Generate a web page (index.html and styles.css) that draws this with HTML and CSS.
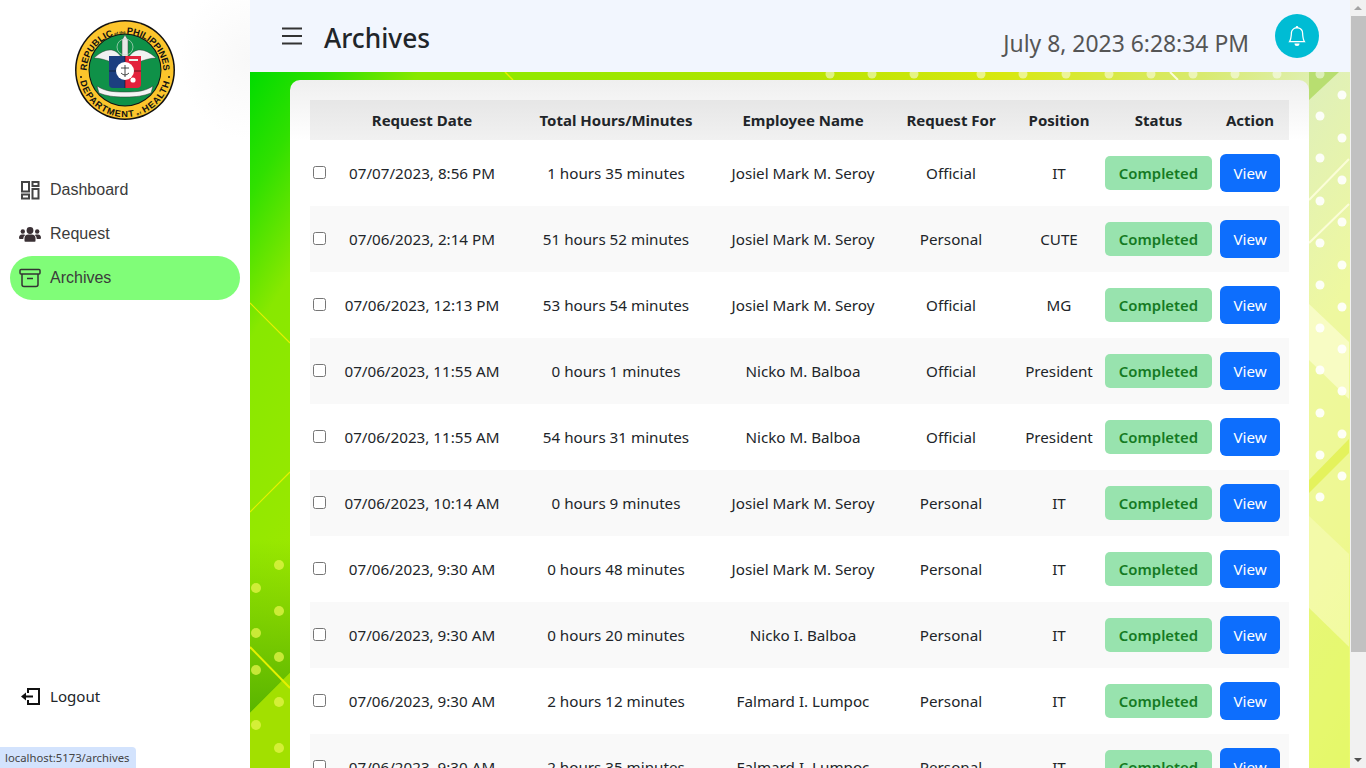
FILE: index.html
```html
<!DOCTYPE html>
<html>
<head>
	<meta charset="utf-8">
	<link rel="stylesheet" href="styles.css">
	<title>Archives</title>
</head>
<body>
<div class="app">
	<aside class="sidebar">
		<div class="logoBox">
			<svg class="logo" width="100" height="100" viewBox="0 0 100 100">
				<defs>
					<path id="arcTop" d="M12 58.500a38.500 38.500 0 1 1 76 0"/>
					<path id="arcBottom" d="M4.800 42.500a46 46 0 1 0 90.400 0"/>
				</defs>
				<circle cx="50" cy="50" r="50" fill="#111"/>
				<circle cx="50" cy="50" r="48.500" fill="#fcc52c"/>
				<circle cx="50" cy="50" r="36.500" fill="#111"/>
				<circle cx="50" cy="50" r="35.500" fill="#0f9148"/>
				<text class="logoText"><textPath href="#arcTop" startOffset="50%" text-anchor="middle">REPUBLIC<tspan class="logoTiny"> of the </tspan>PHILIPPINES</textPath></text>
				<text class="logoText logoTextWide"><textPath href="#arcBottom" startOffset="50%" text-anchor="middle">DEPARTMENT<tspan class="logoTiny"> of </tspan>HEALTH</textPath></text>
				<circle cx="6" cy="57" r="1" fill="#111"/>
				<circle cx="94" cy="57" r="1" fill="#111"/>
				<path d="M46 37C40 27 30 28 19 38c6 0 12 2 17 4l10-1zM54 37c6-10 16-9 27 1-6 0-12 2-17 4l-10-1z" fill="#f1f1f1" stroke="#333" stroke-width=".4"/>
				<path d="M50 15l3 5v18h-6V20z" fill="#e8e8e8" stroke="#444" stroke-width=".5"/>
				<circle cx="50" cy="27" r="8" fill="none" stroke="#bfd8c8" stroke-width=".7"/>
				<path d="M34 36h16v32H38q-4 0-4-4z" fill="#1c3f80"/>
				<path d="M50 36h16v28q0 4-4 4H50z" fill="#e3213c"/>
				<path d="M34 51h32M50 36v32" stroke="#111" stroke-width=".6"/>
				<circle cx="50" cy="51" r="9" fill="#fff"/>
				<path d="M50 45v12M46 48h8M46 53q4 4 8 0" stroke="#333" stroke-width=".9" fill="none"/>
				<path d="M54 39h9v2h-9z" fill="#eee"/>
				<circle cx="58" cy="60" r="2.600" fill="#fff"/>
				<path d="M22 66c8 5 14 6 28 6s20-1 28-6l-2 7c-8 3-14 4-26 4s-18-1-26-4z" fill="#f4f4f4" stroke="#333" stroke-width=".5"/>
			</svg>
		</div>
		<nav class="nav">
			<a class="navItem">
				<svg class="navIcon" width="22" height="20" viewBox="-1 0 22 20" fill="none" stroke="#444" stroke-width="2">
					<rect x="2" y="2" width="7" height="9.500"/><rect x="2" y="14.500" width="7" height="4"/>
					<rect x="12.500" y="2" width="6" height="4"/><rect x="12.500" y="9" width="6" height="9.500"/>
				</svg>
				Dashboard
			</a>
			<a class="navItem">
				<svg class="navIcon" width="22" height="20" viewBox="0 0 22 20" fill="#3a3035">
					<circle cx="11" cy="6.500" r="3.400"/><circle cx="3.800" cy="7.500" r="2.200"/><circle cx="18.200" cy="7.500" r="2.200"/>
					<path d="M5.500 17v-2.500q0-4 4-4h3q4 0 4 4V17q0 .8-.8.8H6.300q-.8 0-.8-.8z"/>
					<path d="M0 14q0-3.500 3-3.500h2q.7 0 1.200.5-2 1.300-2 4H1q-1 0-1-1zM22 14q0-3.500-3-3.500h-2q-.7 0-1.200.5 2 1.300 2 4H21q1 0 1-1z"/>
				</svg>
				Request
			</a>
			<a class="navItem navItemActive">
				<svg class="navIcon" width="22" height="20" viewBox="0 0 22 20" fill="none" stroke="#333" stroke-width="1.500">
					<rect x="1" y="1.500" width="20" height="4.500" rx="1"/>
					<path d="M3 6v10.500q0 2 2 2h12q2 0 2-2V6M8 10.500h6"/>
				</svg>
				Archives
			</a>
		</nav>
		<a class="logout">
			<svg class="navIcon" width="20" height="20" viewBox="0 0 20 20" fill="none" stroke="#111" stroke-width="2">
				<path d="M8 7V3h11v15H8v-4M5 10.500h8"/>
				<path d="M1 10.500L6 6.500v8z" fill="#111" stroke="none"/>
			</svg>
			Logout
		</a>
	</aside>
	<div class="main">
		<header class="topbar">
			<svg class="menuIcon" width="22" height="18" viewBox="0 0 22 18" stroke="#333" stroke-width="2">
				<path d="M1 1.500h20M1 9h20M1 16.500h20"/>
			</svg>
			<h1 class="pageTitle">Archives</h1>
			<div class="clock">July 8, 2023 6:28:34 PM</div>
			<div class="bell">
				<svg width="20" height="20" viewBox="0 0 16 16" fill="#fff">
					<path d="M8 16a2 2 0 0 0 2-2H6a2 2 0 0 0 2 2zM8 1.918l-.797.161A4.002 4.002 0 0 0 4 6c0 .628-.134 2.197-.459 3.742-.16.767-.376 1.566-.663 2.258h10.244c-.287-.692-.502-1.49-.663-2.258C12.134 8.197 12 6.628 12 6a4.002 4.002 0 0 0-3.203-3.92L8 1.917zM14.220 12c.223.447.481.801.78 1H1c.299-.199.557-.553.78-1C2.680 10.200 3 6.880 3 6c0-2.420 1.720-4.440 4.005-4.901a1 1 0 1 1 1.990 0A5.002 5.002 0 0 1 13 6c0 .880.320 4.200 1.220 6z"/>
				</svg>
			</div>
		</header>
		<div class="content">
			<svg class="wallpaper" width="1100" height="696" viewBox="250 72 1100 696" preserveAspectRatio="none">
				<defs>
					<linearGradient id="wallGrad" gradientUnits="userSpaceOnUse" x1="250" y1="72" x2="1350" y2="768">
						<stop offset="0" stop-color="#00dc00"/>
						<stop offset=".05" stop-color="#30e000"/>
						<stop offset=".11" stop-color="#88e800"/>
						<stop offset=".2" stop-color="#96e800"/>
						<stop offset=".36" stop-color="#b8e400"/>
						<stop offset=".49" stop-color="#d8e810"/>
						<stop offset=".62" stop-color="#d8ea70"/>
						<stop offset=".7" stop-color="#e0f0b8"/>
						<stop offset=".8" stop-color="#eef8a0"/>
						<stop offset=".9" stop-color="#eef890"/>
						<stop offset="1" stop-color="#e8fa6a"/>
					</linearGradient>
					<linearGradient id="wallDark" gradientUnits="userSpaceOnUse" x1="270" y1="540" x2="270" y2="715">
						<stop offset="0" stop-color="#58b400" stop-opacity="0"/>
						<stop offset="1" stop-color="#58b400" stop-opacity="1"/>
					</linearGradient>
				</defs>
				<rect x="250" y="72" width="1100" height="696" fill="url(#wallGrad)"/>
				<path d="M250 540h40v133l-40 40z" fill="url(#wallDark)"/>
				<path d="M250 713l40-40v95h-40z" fill="#a2e000"/>
				<path d="M1309 72h30l-30 28z" fill="#b8de70"/>
				<g stroke="#e6f000" fill="none">
					<path d="M250 303l40 40M250 512l40-40" stroke-width="1.200"/>
					<path d="M250 647l40 41" stroke-width="2"/>
					<path d="M505 72l8 8" stroke-width="1.500"/>
				</g>
				<g stroke="#fbfdd8" fill="none" stroke-width="2">
					<path d="M1309 200l40-41M1309 243l40-39M1170 72l8 8"/>
				</g>
				<path d="M1309 304l40 38v57l-40-39z" fill="#fbfdd0" fill-opacity=".75"/>
				<path d="M1309 480l40-41v14l-40 40z" fill="#e4f25c"/>
				<path d="M1309 516l40 38v93l-40-39z" fill="#f6fbb8" fill-opacity=".6"/>
				<path d="M1309 608l40 39v121h-40z" fill="#e2f668" fill-opacity=".6"/>
				<g fill="#e6f44a" fill-opacity=".75">
					<circle cx="279" cy="565" r="5"/><circle cx="279" cy="611" r="5"/><circle cx="279" cy="657" r="5"/><circle cx="279" cy="702" r="5"/><circle cx="279" cy="748" r="5"/>
					<circle cx="256" cy="588" r="5"/><circle cx="256" cy="633" r="5"/><circle cx="256" cy="670" r="5"/><circle cx="256" cy="725" r="5"/>
				</g>
				<g fill="#fff" fill-opacity=".5">
					<circle cx="830" cy="74" r="4.500"/><circle cx="872" cy="74" r="4.500"/><circle cx="914" cy="74" r="4.500"/><circle cx="981" cy="74" r="4.500"/><circle cx="1023" cy="74" r="4.500"/><circle cx="1066" cy="74" r="4.500"/><circle cx="1109" cy="74" r="4.500"/><circle cx="1151" cy="74" r="4.500"/><circle cx="1193" cy="74" r="4.500"/><circle cx="1235" cy="74" r="4.500"/><circle cx="1277" cy="74" r="4.500"/><circle cx="1320" cy="74" r="4.500"/>
				</g>
				<g fill="#fff" fill-opacity=".9">
					<circle cx="1320" cy="116" r="4.500"/><circle cx="1320" cy="158" r="4.500"/><circle cx="1320" cy="201" r="4.500"/><circle cx="1320" cy="243" r="4.500"/><circle cx="1320" cy="285" r="4.500"/><circle cx="1320" cy="328" r="4.500"/><circle cx="1320" cy="370" r="4.500"/><circle cx="1320" cy="413" r="4.500"/><circle cx="1320" cy="455" r="4.500"/><circle cx="1320" cy="497" r="4.500"/>
					<circle cx="1342" cy="95" r="4.500"/><circle cx="1342" cy="138" r="4.500"/><circle cx="1342" cy="180" r="4.500"/><circle cx="1342" cy="222" r="4.500"/><circle cx="1342" cy="265" r="4.500"/><circle cx="1342" cy="307" r="4.500"/><circle cx="1342" cy="349" r="4.500"/><circle cx="1342" cy="391" r="4.500"/><circle cx="1342" cy="434" r="4.500"/><circle cx="1342" cy="476" r="4.500"/>
				</g>
			</svg>
			<div class="card">
				<table class="requestTable">
					<colgroup>
						<col class="colCheck"><col class="colDate"><col class="colTotal"><col class="colName"><col class="colFor"><col class="colPosition"><col class="colStatus"><col class="colAction">
					</colgroup>
					<thead>
						<tr><th></th><th>Request Date</th><th>Total Hours/Minutes</th><th>Employee Name</th><th>Request For</th><th>Position</th><th>Status</th><th class="actionCell">Action</th></tr>
					</thead>
					<tbody>
						<tr><td><input type="checkbox" class="rowCheck"></td><td>07/07/2023, 8:56 PM</td><td>1 hours 35 minutes</td><td>Josiel Mark M. Seroy</td><td>Official</td><td>IT</td><td><span class="badge">Completed</span></td><td class="actionCell"><button class="viewButton">View</button></td></tr>
						<tr><td><input type="checkbox" class="rowCheck"></td><td>07/06/2023, 2:14 PM</td><td>51 hours 52 minutes</td><td>Josiel Mark M. Seroy</td><td>Personal</td><td>CUTE</td><td><span class="badge">Completed</span></td><td class="actionCell"><button class="viewButton">View</button></td></tr>
						<tr><td><input type="checkbox" class="rowCheck"></td><td>07/06/2023, 12:13 PM</td><td>53 hours 54 minutes</td><td>Josiel Mark M. Seroy</td><td>Official</td><td>MG</td><td><span class="badge">Completed</span></td><td class="actionCell"><button class="viewButton">View</button></td></tr>
						<tr><td><input type="checkbox" class="rowCheck"></td><td>07/06/2023, 11:55 AM</td><td>0 hours 1 minutes</td><td>Nicko M. Balboa</td><td>Official</td><td>President</td><td><span class="badge">Completed</span></td><td class="actionCell"><button class="viewButton">View</button></td></tr>
						<tr><td><input type="checkbox" class="rowCheck"></td><td>07/06/2023, 11:55 AM</td><td>54 hours 31 minutes</td><td>Nicko M. Balboa</td><td>Official</td><td>President</td><td><span class="badge">Completed</span></td><td class="actionCell"><button class="viewButton">View</button></td></tr>
						<tr><td><input type="checkbox" class="rowCheck"></td><td>07/06/2023, 10:14 AM</td><td>0 hours 9 minutes</td><td>Josiel Mark M. Seroy</td><td>Personal</td><td>IT</td><td><span class="badge">Completed</span></td><td class="actionCell"><button class="viewButton">View</button></td></tr>
						<tr><td><input type="checkbox" class="rowCheck"></td><td>07/06/2023, 9:30 AM</td><td>0 hours 48 minutes</td><td>Josiel Mark M. Seroy</td><td>Personal</td><td>IT</td><td><span class="badge">Completed</span></td><td class="actionCell"><button class="viewButton">View</button></td></tr>
						<tr><td><input type="checkbox" class="rowCheck"></td><td>07/06/2023, 9:30 AM</td><td>0 hours 20 minutes</td><td>Nicko I. Balboa</td><td>Personal</td><td>IT</td><td><span class="badge">Completed</span></td><td class="actionCell"><button class="viewButton">View</button></td></tr>
						<tr><td><input type="checkbox" class="rowCheck"></td><td>07/06/2023, 9:30 AM</td><td>2 hours 12 minutes</td><td>Falmard I. Lumpoc</td><td>Personal</td><td>IT</td><td><span class="badge">Completed</span></td><td class="actionCell"><button class="viewButton">View</button></td></tr>
						<tr><td><input type="checkbox" class="rowCheck"></td><td>07/06/2023, 9:30 AM</td><td>2 hours 35 minutes</td><td>Falmard I. Lumpoc</td><td>Personal</td><td>IT</td><td><span class="badge">Completed</span></td><td class="actionCell"><button class="viewButton">View</button></td></tr>
					</tbody>
				</table>
			</div>
		</div>
	</div>
	<div class="scrollbar">
		<div class="scrollUp"></div>
		<div class="scrollThumb"></div>
		<div class="scrollDown"></div>
	</div>
</div>
<div class="statusLink">localhost:5173/archives</div>
</body>
</html>
```

FILE: styles.css
```css
html,body{
	margin: 0;
	height: 100%;
	overflow: hidden;
}
body{
	font-family: "Noto Sans", sans-serif;
	font-size: 15.2px;
	color: #212529;
	background-color: #fff;
}
.app{
	display: flex;
	height: 100vh;
	overflow: hidden;
}

/* sidebar */
.sidebar{
	width: 250px;
	flex: none;
	display: flex;
	flex-direction: column;
	background-color: #fff;
}
.logoBox{
	display: flex;
	justify-content: center;
	padding: 20px 0 48px;
	background-image: radial-gradient(ellipse 70px 80px at 100% 60px, #f8f8f8, #fff);
}
.logoText{
	font-family: "Liberation Sans", sans-serif;
	font-size: 9.2px;
	font-weight: bold;
	fill: #111;
}
.logoTextWide{
	letter-spacing: .9px;
}
.logoTiny{
	font-size: 4px;
}
.nav{
	display: flex;
	flex-direction: column;
	padding: 0 10px;
	font-family: "Liberation Sans", sans-serif;
	font-size: 16px;
	color: #3b3b3b;
}
.navItem{
	display: flex;
	align-items: center;
	gap: 9px;
	height: 44px;
	padding-left: 9px;
}
.navIcon{
	flex: none;
}
.navItemActive{
	background-color: #80fd78;
	border-radius: 22px;
}
.logout{
	display: flex;
	align-items: center;
	gap: 10px;
	margin-top: auto;
	margin-bottom: 62px;
	padding-left: 20px;
	font-size: 15.1px;
	color: #212529;
}

/* top bar */
.main{
	flex: 1;
	min-width: 0;
	display: flex;
	flex-direction: column;
}
.topbar{
	height: 72px;
	flex: none;
	display: flex;
	align-items: flex-start;
	padding-left: 31px;
	padding-right: 31px;
	box-sizing: border-box;
	background-color: #f2f6fe;
}
.menuIcon{
	margin-top: 27px;
	flex: none;
}
.pageTitle{
	margin: 18px 0 0 21px;
	font-size: 26.3px;
	line-height: 40px;
	font-weight: 500;
}
.clock{
	margin: 27px 26px 0 auto;
	font-size: 22.9px;
	line-height: 34px;
	color: #555;
}
.bell{
	width: 44px;
	height: 44px;
	margin-top: 14px;
	flex: none;
	display: flex;
	align-items: center;
	justify-content: center;
	border-radius: 50%;
	background-color: #00bcd4;
}

/* page body */
.content{
	flex: 1;
	min-height: 0;
	position: relative;
	overflow: hidden;
	padding: 8px 41px 0 40px;
}
.wallpaper{
	position: absolute;
	top: 0;
	left: 0;
}
.card{
	position: relative;
	height: 100%;
	padding: 20px 20px 0;
	box-sizing: border-box;
	border-radius: 10px 10px 0 0;
	overflow: hidden;
	background-image: linear-gradient(#efefef, #fff 60px);
}
.requestTable{
	width: 979px;
	table-layout: fixed;
	border-collapse: collapse;
	text-align: center;
}
.colCheck{ width: 27px; }
.colDate{ width: 170px; }
.colTotal{ width: 218px; }
.colName{ width: 156px; }
.colFor{ width: 140px; }
.colPosition{ width: 76px; }
.colStatus{ width: 123px; }
.colAction{ width: 69px; }
.requestTable th{
	height: 40px;
	padding: 0;
	font-size: 15px;
	font-weight: bold;
	background-color: rgba(0,0,0,.055);
}
.requestTable td{
	height: 66px;
	padding: 0;
	white-space: nowrap;
}
.requestTable tbody tr:nth-child(even){
	background-color: #f9f9f9;
}
.requestTable .actionCell{
	padding-right: 9px;
}
.rowCheck{
	display: block;
	width: 13px;
	height: 13px;
	margin: 0 0 2px 3px;
}
.badge{
	display: block;
	margin: 0 8px;
	height: 34px;
	line-height: 34px;
	font-size: 14.9px;
	font-weight: 600;
	color: #157a23;
	background-color: #98e3ae;
	border-radius: 5px;
}
.viewButton{
	width: 60px;
	height: 38px;
	padding: 0;
	font-family: inherit;
	font-size: 15.2px;
	color: #fff;
	background-color: #0d6efd;
	border: none;
	border-radius: 6px;
}

/* fake scrollbar and browser link preview */
.scrollbar{
	width: 16px;
	flex: none;
	display: flex;
	flex-direction: column;
	align-items: center;
	background-color: #f1f1f1;
}
.scrollUp{
	margin: 6px 0 6px;
	border: 4px solid transparent;
	border-top: none;
	border-bottom: 4px solid #a3a3a3;
}
.scrollThumb{
	width: 15px;
	height: 636px;
	background-color: #c1c1c1;
}
.scrollDown{
	margin-top: auto;
	margin-bottom: 6px;
	border: 4px solid transparent;
	border-bottom: none;
	border-top: 4px solid #505050;
}
.statusLink{
	position: absolute;
	left: 0;
	bottom: 0;
	height: 21px;
	padding: 0 7px 0 5px;
	font-family: "Noto Sans", sans-serif;
	font-size: 11.3px;
	line-height: 21px;
	color: #444;
	background-color: #d3e3fd;
	border-top-right-radius: 4px;
}
```
